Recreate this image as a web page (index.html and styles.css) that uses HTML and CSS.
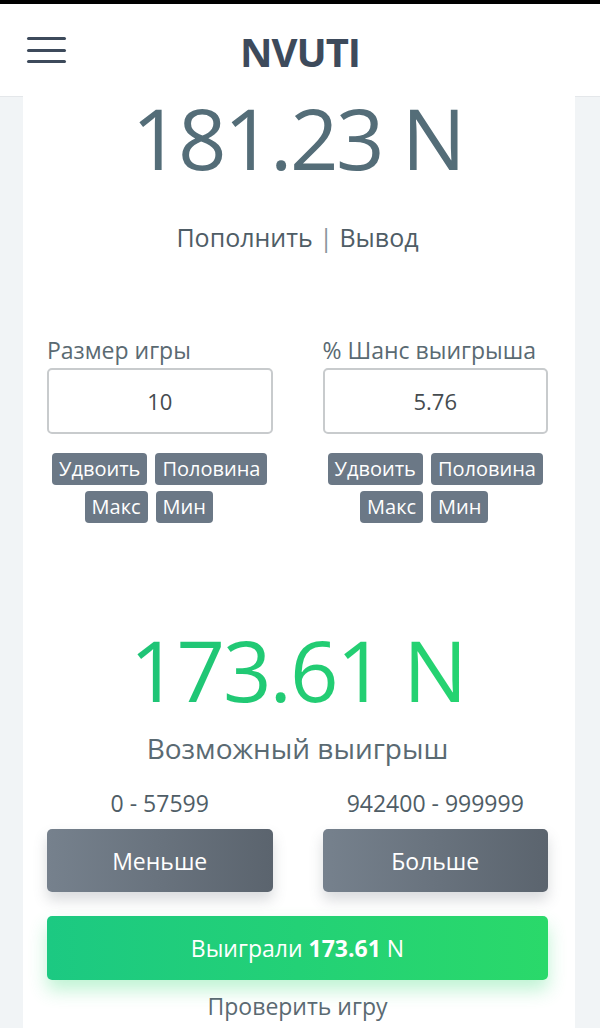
FILE: index.html
```html
<!DOCTYPE html>
<html lang="ru">
<head>
    <meta charset="UTF-8">
    <title>NVUTI</title>
<link rel="stylesheet" href="styles.css">
</head>
<body>

<div class="topbar"></div>

<header class="header">
    <div class="burger">
        <span></span><span></span><span></span>
    </div>
    <div class="logo">NVUTI</div>
    <div></div>
</header>

<main class="game">
    <div class="balance">181.23 N</div>
    <div class="links">Пополнить <span class="sep">|</span> Вывод</div>

    <div class="controls">
        <div class="field">
            <label class="field-label">Размер игры</label>
            <div class="input">10</div>
            <div class="btn-row first">
                <button class="btn-sm">Удвоить</button>
                <button class="btn-sm">Половина</button>
            </div>
            <div class="btn-row shift">
                <button class="btn-sm">Макс</button>
                <button class="btn-sm">Мин</button>
            </div>
        </div>
        <div class="field">
            <label class="field-label">% Шанс выигрыша</label>
            <div class="input">5.76</div>
            <div class="btn-row first">
                <button class="btn-sm">Удвоить</button>
                <button class="btn-sm">Половина</button>
            </div>
            <div class="btn-row shift">
                <button class="btn-sm">Макс</button>
                <button class="btn-sm">Мин</button>
            </div>
        </div>
    </div>

    <div class="win">173.61 N</div>
    <div class="win-label">Возможный выигрыш</div>

    <div class="bets">
        <div class="bet">
            <div class="range">0 - 57599</div>
            <button class="btn-bet">Меньше</button>
        </div>
        <div class="bet">
            <div class="range">942400 - 999999</div>
            <button class="btn-bet">Больше</button>
        </div>
    </div>

    <div class="result">Выиграли <b>173.61</b> N</div>
    <div class="check">Проверить игру</div>
</main>

</body>
</html>
```

FILE: styles.css
```css
body {
    margin: 0;
    background-color: #f1f4f6;
    font-family: 'Open Sans', 'Noto Sans', sans-serif;
    color: #5a6a72;
    overflow: hidden;
}
.topbar {
    height: 4px;
    background: #000;
}
.header {
    height: 92px;
    background: #fff;
    border-bottom: 1px solid #e4e7ea;
    display: grid;
    grid-template-columns: 1fr auto 1fr;
    align-items: center;
}
.burger {
    padding-left: 27px;
    display: flex;
    flex-direction: column;
    gap: 8.5px;
}
.burger span {
    display: block;
    width: 39px;
    height: 3px;
    border-radius: 2px;
    background: #3d4a5b;
}
.logo {
    font-size: 40px;
    font-weight: 700;
    color: #3d4a5b;
    letter-spacing: -1px;
    padding-top: 2px;
}
.game {
    background: #fff;
    margin: 0 25px 0 23px;
    padding: 0 27px 0 24px;
    height: 940px;
    text-align: center;
}
.balance {
    font-size: 85px;
    font-weight: 400;
    line-height: 85px;
    letter-spacing: -2.5px;
    color: #546d78;
    margin-top: -2px;
}
.links {
    font-size: 25px;
    line-height: 30px;
    color: #4f5d66;
    margin-top: 42px;
}
.sep {
    color: #8a969c;
}
.controls {
    display: grid;
    grid-template-columns: 1fr 1fr;
    column-gap: 50px;
    margin-top: 84px;
}
.field-label {
    display: block;
    text-align: left;
    font-size: 23px;
    line-height: 28px;
    color: #5a6a72;
}
.input {
    margin-top: 4px;
    height: 62px;
    border: 2px solid #c8cbcd;
    border-radius: 5px;
    font-size: 22px;
    line-height: 62px;
    color: #454b4f;
}
.btn-row {
    display: flex;
    justify-content: center;
    gap: 8px;
    margin-top: 6px;
}
.btn-row.first {
    margin-top: 19px;
}
.btn-row.shift {
    padding-right: 22px;
}
.btn-sm {
    font-family: inherit;
    font-size: 20px;
    line-height: 32px;
    height: 32px;
    padding: 0 7px;
    border: none;
    border-radius: 4px;
    background: #6b7886;
    color: #fff;
}
.win {
    margin-top: 104px;
    font-size: 85px;
    font-weight: 400;
    line-height: 84px;
    letter-spacing: -2px;
    background: linear-gradient(90deg, #1dbf78, #27d86f);
    -webkit-background-clip: text;
    background-clip: text;
    color: transparent;
}
.win-label {
    font-size: 28px;
    line-height: 34px;
    margin-top: 20px;
    color: #5a6a72;
}
.bets {
    display: grid;
    grid-template-columns: 1fr 1fr;
    column-gap: 50px;
    margin-top: 23px;
}
.range {
    font-size: 23px;
    line-height: 30px;
    color: #4f5d66;
}
.btn-bet {
    display: block;
    width: 100%;
    margin-top: 11px;
    height: 63px;
    border: none;
    border-radius: 5px;
    background: linear-gradient(90deg, #76818d, #5b646e);
    color: #fff;
    font-family: inherit;
    font-size: 23px;
    box-shadow: 0 8px 14px rgba(80, 90, 100, 0.22);
}
.result {
    margin-top: 24px;
    height: 64px;
    line-height: 64px;
    border-radius: 5px;
    background: linear-gradient(90deg, #1cc982, #2ad96a);
    color: #fff;
    font-size: 23px;
    box-shadow: 0 10px 18px rgba(40, 215, 110, 0.3);
}
.result b {
    font-weight: 700;
}
.check {
    margin-top: 11px;
    font-size: 23px;
    line-height: 30px;
    color: #5a6a72;
}
```
